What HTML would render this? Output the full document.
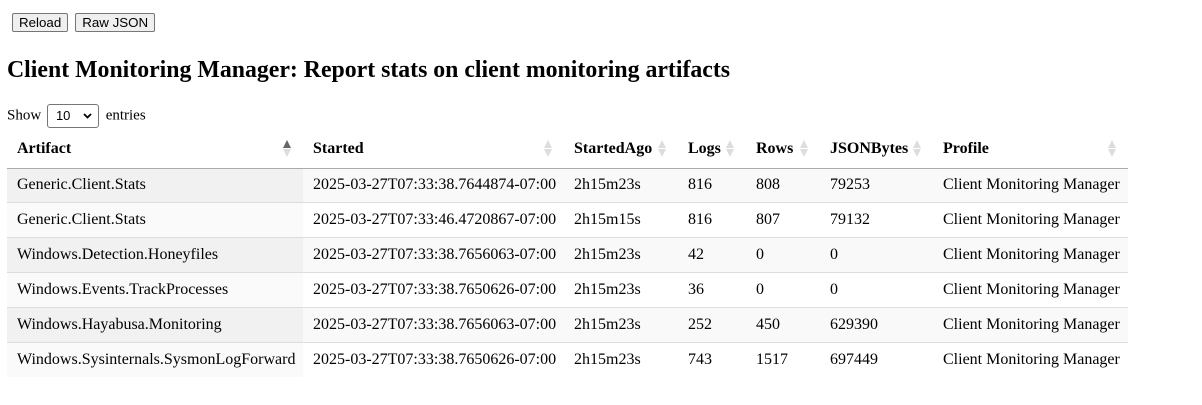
<!DOCTYPE html>
<html><head><style>
body{margin:8px;font-family:"Liberation Serif",serif;font-size:16px;color:#000;background:#fff}
button{font-family:"Liberation Sans",sans-serif;font-size:13.33px;padding:1px 6px;border:1px solid #767676;border-radius:2px;background:#efefef;height:19px;margin:0 4px 0 3px;line-height:15px}
.btns{position:absolute;top:13px;left:9px}
h2{position:absolute;top:57px;left:7px;margin:0;font-size:23.8px;font-weight:bold}
.len{position:absolute;top:104px;left:7px;font-size:15px}
.sel{display:inline-block;width:52px;height:24px;border:1px solid #767676;border-radius:3px;vertical-align:middle;box-sizing:border-box;position:relative;font-family:"Liberation Sans",sans-serif;font-size:13px;line-height:22px;padding-left:8px;margin:0 3px 0 2px}
.sel svg{position:absolute;right:6px;top:8px}
table{position:absolute;top:130px;left:7px;border-collapse:collapse;table-layout:fixed;width:1121px;font-size:16px}
th{height:38px;text-align:left;padding:0 10px;border-bottom:1px solid #aaa;position:relative;box-sizing:border-box}
td{height:35px;padding:0 10px;border-top:1px solid #ddd;box-sizing:border-box;white-space:nowrap}
tr.f td{border-top:none;height:34px}
tr.o td{background:#f9f9f9}tr.o td.s{background:#f1f1f1}
tr.e td.s{background:#fafafa}
.ic{position:absolute;right:12px;top:10px;width:8px}
.ic i{display:block;width:0;height:0;border-left:4px solid transparent;border-right:4px solid transparent}
.up{border-bottom:8px solid #ddd;margin-bottom:1px}.dn{border-top:8px solid #ddd}
.up.a{border-bottom-color:#666}
</style></head><body>
<div class="btns"><button>Reload</button><button>Raw JSON</button></div>
<h2>Client Monitoring Manager: Report stats on client monitoring artifacts</h2>
<div class="len">Show <span class="sel">10<svg width="9" height="6"><path d="M1 1L4.5 4.5L8 1" stroke="#000" stroke-width="1.8" fill="none"/></svg></span> entries</div>
<table>
<colgroup><col style="width:296px"><col style="width:261px"><col style="width:114px"><col style="width:68px"><col style="width:74px"><col style="width:113px"><col style="width:195px"></colgroup>
<tr><th>Artifact<span class="ic"><i class="up a"></i><i class="dn"></i></span></th><th>Started<span class="ic"><i class="up"></i><i class="dn"></i></span></th><th>StartedAgo<span class="ic"><i class="up"></i><i class="dn"></i></span></th><th>Logs<span class="ic"><i class="up"></i><i class="dn"></i></span></th><th>Rows<span class="ic"><i class="up"></i><i class="dn"></i></span></th><th>JSONBytes<span class="ic"><i class="up"></i><i class="dn"></i></span></th><th>Profile<span class="ic"><i class="up"></i><i class="dn"></i></span></th></tr>
<tr class="o f"><td class="s">Generic.Client.Stats</td><td>2025-03-27T07:33:38.7644874-07:00</td><td>2h15m23s</td><td>816</td><td>808</td><td>79253</td><td>Client Monitoring Manager</td></tr>
<tr class="e"><td class="s">Generic.Client.Stats</td><td>2025-03-27T07:33:46.4720867-07:00</td><td>2h15m15s</td><td>816</td><td>807</td><td>79132</td><td>Client Monitoring Manager</td></tr>
<tr class="o"><td class="s">Windows.Detection.Honeyfiles</td><td>2025-03-27T07:33:38.7656063-07:00</td><td>2h15m23s</td><td>42</td><td>0</td><td>0</td><td>Client Monitoring Manager</td></tr>
<tr class="e"><td class="s">Windows.Events.TrackProcesses</td><td>2025-03-27T07:33:38.7650626-07:00</td><td>2h15m23s</td><td>36</td><td>0</td><td>0</td><td>Client Monitoring Manager</td></tr>
<tr class="o"><td class="s">Windows.Hayabusa.Monitoring</td><td>2025-03-27T07:33:38.7656063-07:00</td><td>2h15m23s</td><td>252</td><td>450</td><td>629390</td><td>Client Monitoring Manager</td></tr>
<tr class="e"><td class="s">Windows.Sysinternals.SysmonLogForward</td><td>2025-03-27T07:33:38.7650626-07:00</td><td>2h15m23s</td><td>743</td><td>1517</td><td>697449</td><td>Client Monitoring Manager</td></tr>
</table>
</body></html>
